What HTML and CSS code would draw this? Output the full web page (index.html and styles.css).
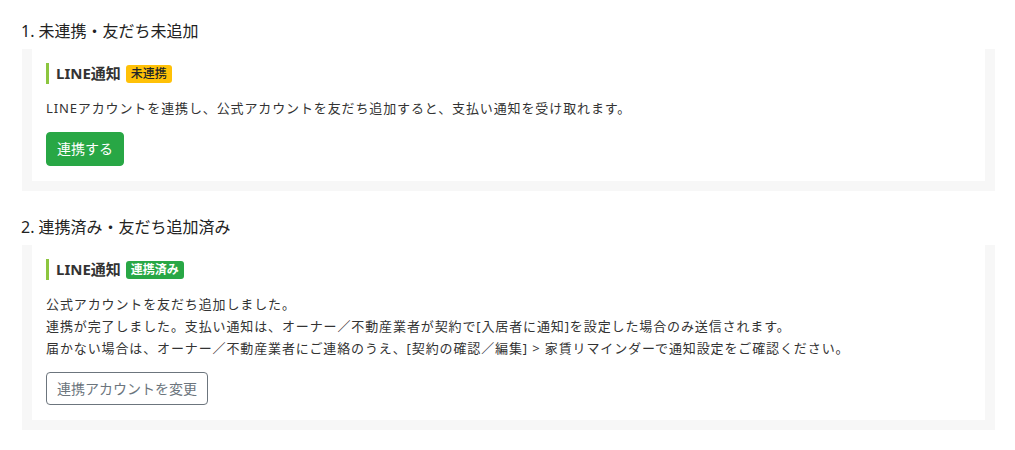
FILE: index.html
```html
<!DOCTYPE html>
<html lang="ja">
<head>
<meta charset="utf-8">
<title>LINE通知</title>
<link rel="stylesheet" href="styles.css">
</head>
<body>
<div class="page">
  <section class="section">
    <h2 class="section-title">1. 未連携・友だち未追加</h2>
    <div class="frame">
      <div class="card">
        <div class="card-title">
          <span class="card-title-text">LINE通知</span>
          <span class="badge badge-warning">未連携</span>
        </div>
        <p class="card-text">LINEアカウントを連携し、公式アカウントを友だち追加すると、支払い通知を受け取れます。</p>
        <button class="btn btn-success" type="button">連携する</button>
      </div>
    </div>
  </section>
  <section class="section">
    <h2 class="section-title">2. 連携済み・友だち追加済み</h2>
    <div class="frame">
      <div class="card">
        <div class="card-title">
          <span class="card-title-text">LINE通知</span>
          <span class="badge badge-success">連携済み</span>
        </div>
        <p class="card-text">公式アカウントを友だち追加しました。<br>連携が完了しました。支払い通知は、オーナー／不動産業者が契約で[入居者に通知]を設定した場合のみ送信されます。<br>届かない場合は、オーナー／不動産業者にご連絡のうえ、[契約の確認／編集] &gt; 家賃リマインダーで通知設定をご確認ください。</p>
        <button class="btn btn-outline" type="button">連携アカウントを変更</button>
      </div>
    </div>
  </section>
</div>
</body>
</html>
```

FILE: styles.css
```css
* { box-sizing: border-box; }

html, body {
  margin: 0;
  padding: 0;
  background: #ffffff;
}

body {
  font-family: "Noto Sans", "Noto Sans CJK JP", sans-serif;
  color: #333333;
}

.page {
  padding: 19px 20px 0 22px;
  display: flex;
  flex-direction: column;
  gap: 24px;
}

.section-title {
  margin: 0 0 6px -1px;
  font-size: 16px;
  line-height: 24px;
  font-weight: 400;
  color: #222222;
}

.frame {
  background: #f7f7f7;
  padding: 0 10px 10px 10px;
}

.card {
  background: #ffffff;
  padding: 14px 14px 15px 14px;
  display: flex;
  flex-direction: column;
  align-items: flex-start;
}

.card-title {
  display: flex;
  align-items: center;
  gap: 5px;
  height: 21px;
  border-left: 3px solid #8cc63f;
  padding-left: 7px;
  margin-bottom: 13px;
}

.card-title-text {
  font-size: 15px;
  font-weight: 700;
  color: #333333;
  line-height: 21px;
}

.badge {
  display: inline-block;
  font-size: 12px;
  font-weight: 700;
  line-height: 18px;
  padding: 0 5px;
  border-radius: 3px;
}

.badge-warning {
  background: #ffc107;
  color: #212529;
  font-weight: 500;
}

.badge-success {
  background: #28a745;
  color: #ffffff;
}

.card-text {
  margin: 0 0 13px 0;
  font-size: 13px;
  line-height: 22px;
  letter-spacing: 0.88px;
  color: #333333;
}

.btn {
  font-family: "Noto Sans", "Noto Sans CJK JP", sans-serif;
  font-size: 14px;
  line-height: 20px;
  padding: 6px 10px;
  border-radius: 4px;
  border: 1px solid transparent;
  cursor: pointer;
}

.btn-success {
  background: #28a745;
  border-color: #28a745;
  color: #ffffff;
  height: 34px;
}

.btn-outline {
  background: #ffffff;
  border-color: #6c757d;
  color: #6c757d;
  height: 33px;
}
```
